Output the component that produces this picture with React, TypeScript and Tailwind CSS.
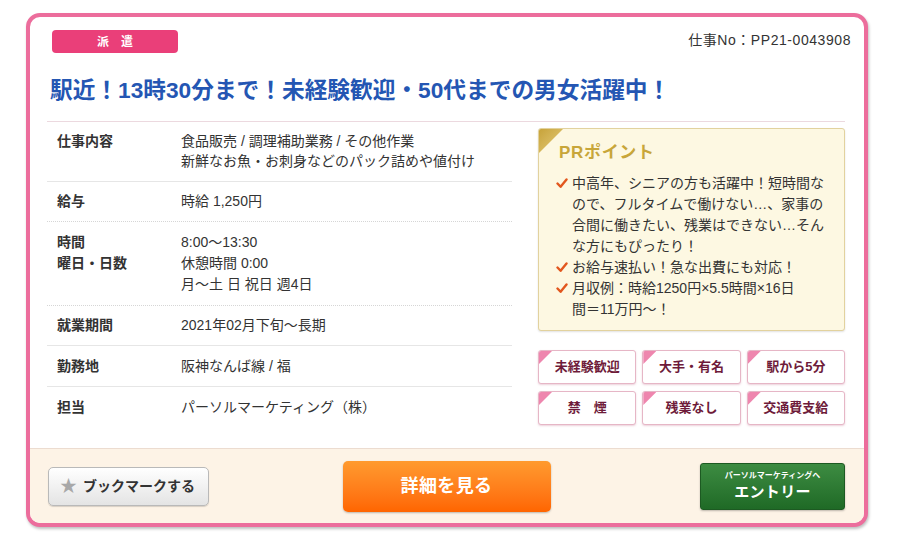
import React from "react";

const font = "font-['Liberation_Sans','Noto_Sans_CJK_JP',sans-serif]";

const rows: { label: string[]; value: string[]; cls: string }[] = [
  {
    label: ["仕事内容"],
    value: ["食品販売 / 調理補助業務 / その他作業", "新鮮なお魚・お刺身などのパック詰めや値付け"],
    cls: "border-b border-[#e6e6e6] pt-[9px] pb-[10px]",
  },
  {
    label: ["給与"],
    value: ["時給 1,250円"],
    cls: "border-b border-dotted border-[#d6d6d6] pt-[9px] pb-[10px]",
  },
  {
    label: ["時間", "曜日・日数"],
    value: ["8:00〜13:30", "休憩時間 0:00", "月〜土 日 祝日 週4日"],
    cls: "border-b border-dotted border-[#d6d6d6] pt-[10px] pb-[10px] leading-[21px]",
  },
  {
    label: ["就業期間"],
    value: ["2021年02月下旬〜長期"],
    cls: "border-b border-[#e6e6e6] pt-[9px] pb-[10px]",
  },
  {
    label: ["勤務地"],
    value: ["阪神なんば線 / 福"],
    cls: "border-b border-[#e6e6e6] pt-[10px] pb-[10px]",
  },
  {
    label: ["担当"],
    value: ["パーソルマーケティング（株）"],
    cls: "pt-[10px] pb-[9px]",
  },
];

const points = [
  "中高年、シニアの方も活躍中！短時間なので、フルタイムで働けない…、家事の合間に働きたい、残業はできない…そんな方にもぴったり！",
  "お給与速払い！急な出費にも対応！",
  "月収例：時給1250円×5.5時間×16日\n間＝11万円〜！",
];

const tags = ["未経験歓迎", "大手・有名", "駅から5分", "禁　煙", "残業なし", "交通費支給"];

function Check() {
  return (
    <svg width="12" height="11" viewBox="0 0 12 11" className="mt-[5px] shrink-0">
      <path d="M1.5 5.5 L4.6 8.8 L10.5 1.5" fill="none" stroke="#e2571e" strokeWidth="2.4" strokeLinecap="round" strokeLinejoin="round" />
    </svg>
  );
}

export default function App() {
  return (
    <div className={`${font} w-[900px] h-[533px] bg-white pt-[13px] pl-[26px] text-[#333]`}>
      <div className="w-[842px] overflow-hidden rounded-[14px] border-4 border-[#ec6d9c] bg-white shadow-[1px_2px_3px_rgba(0,0,0,0.25)]">
        <div className="pl-[17px] pr-[19px] pt-[13px] pb-[22px]">
          <div className="flex items-center justify-between">
            <div className="ml-[5px] flex h-[23px] w-[126px] items-center justify-center rounded-[4px] bg-[#ea3f79] text-[12px] font-bold text-white">
              派　遣
            </div>
            <div className="-mr-[6px] -mt-[2px] text-[14px] tracking-[0.04em]">仕事No：PP21-0043908</div>
          </div>
          <h1 className="mt-[23px] ml-[3px] text-[22.7px] font-bold leading-[28px] text-[#2456b3]">
            駅近！13時30分まで！未経験歓迎・50代までの男女活躍中！
          </h1>
          <div className="mt-[17px] border-t border-[#ecd9df]" />

          <div className="flex justify-between">
            <div className="w-[465px] text-[14px] leading-[20px]">
              {rows.map((r) => (
                <div key={r.label[0]} className={`flex ${r.cls}`}>
                  <div className="w-[134px] shrink-0 pl-[10px] font-bold">
                    {r.label.map((l) => (
                      <div key={l}>{l}</div>
                    ))}
                  </div>
                  <div>
                    {r.value.map((v) => (
                      <div key={v}>{v}</div>
                    ))}
                  </div>
                </div>
              ))}
            </div>

            <div className="mt-[6px] w-[307px]">
              <div className="relative overflow-hidden rounded-[3px] border border-[#e2d29e] bg-[#fdf8e2] pl-[17px] pr-[16px] pt-[12px] pb-[10px] shadow-[0_1px_2px_rgba(0,0,0,0.12)]">
                <div className="absolute left-0 top-0 h-[24px] w-[24px] bg-gradient-to-br from-[#c7a33a] to-[#e6cd7a] [clip-path:polygon(0_0,100%_0,0_100%)]" />
                <div className="pl-[3px] text-[17px] font-bold leading-[24px] tracking-[0.04em] text-[#c8a63a]">PRポイント</div>
                <ul className="mt-[8px] text-[14px] leading-[21px]">
                  {points.map((p) => (
                    <li key={p} className="flex gap-[4px]">
                      <Check />
                      <span className="whitespace-pre-line">{p}</span>
                    </li>
                  ))}
                </ul>
              </div>

              <div className="mt-[19px] grid grid-cols-3 gap-x-[6px] gap-y-[7px]">
                {tags.map((t) => (
                  <div
                    key={t}
                    className="relative flex h-[34px] items-center justify-center overflow-hidden rounded-[3px] border border-[#e6b6c6] bg-white text-[13px] font-bold text-[#6e1b3a] shadow-[0_1px_2px_rgba(200,120,150,0.35)]"
                  >
                    <div className="absolute left-0 top-0 h-[13px] w-[13px] bg-[#ee86ae] [clip-path:polygon(0_0,100%_0,0_100%)]" />
                    {t}
                  </div>
                ))}
              </div>
            </div>
          </div>
        </div>

        <div className="grid h-[75px] grid-cols-[1fr_auto_1fr] items-center border-t border-[#ecdcd0] bg-[#fdf3e6] pl-[18px] pr-[19px]">
          <button className="flex h-[39px] w-[161px] items-center justify-self-start rounded-[5px] border border-[#b9b9b9] bg-gradient-to-b from-white to-[#e4e4e4] pl-[11px] text-[14px] font-bold text-[#333] shadow-[0_1px_1px_rgba(0,0,0,0.15)]">
            <span className="mr-[6px] text-[17px] leading-none text-[#a8a8a8]">★</span>
            ブックマークする
          </button>
          <button className="h-[51px] w-[208px] rounded-[5px] bg-gradient-to-b from-[#ff9a2e] to-[#ff6500] text-[18px] font-bold tracking-[0.02em] text-white shadow-[0_1px_2px_rgba(0,0,0,0.25)]">
            詳細を見る
          </button>
          <button className="flex h-[47px] w-[145px] flex-col items-center justify-center justify-self-end rounded-[3px] border border-[#1d5a22] bg-gradient-to-b from-[#3d8c42] to-[#1f6a26] text-white shadow-[0_1px_2px_rgba(0,0,0,0.25)]">
            <span className="text-[8px] font-bold leading-[10px]">パーソルマーケティングへ</span>
            <span className="mt-[2px] text-[15px] font-bold leading-[18px] tracking-[0.02em]">エントリー</span>
          </button>
        </div>
      </div>
    </div>
  );
}
